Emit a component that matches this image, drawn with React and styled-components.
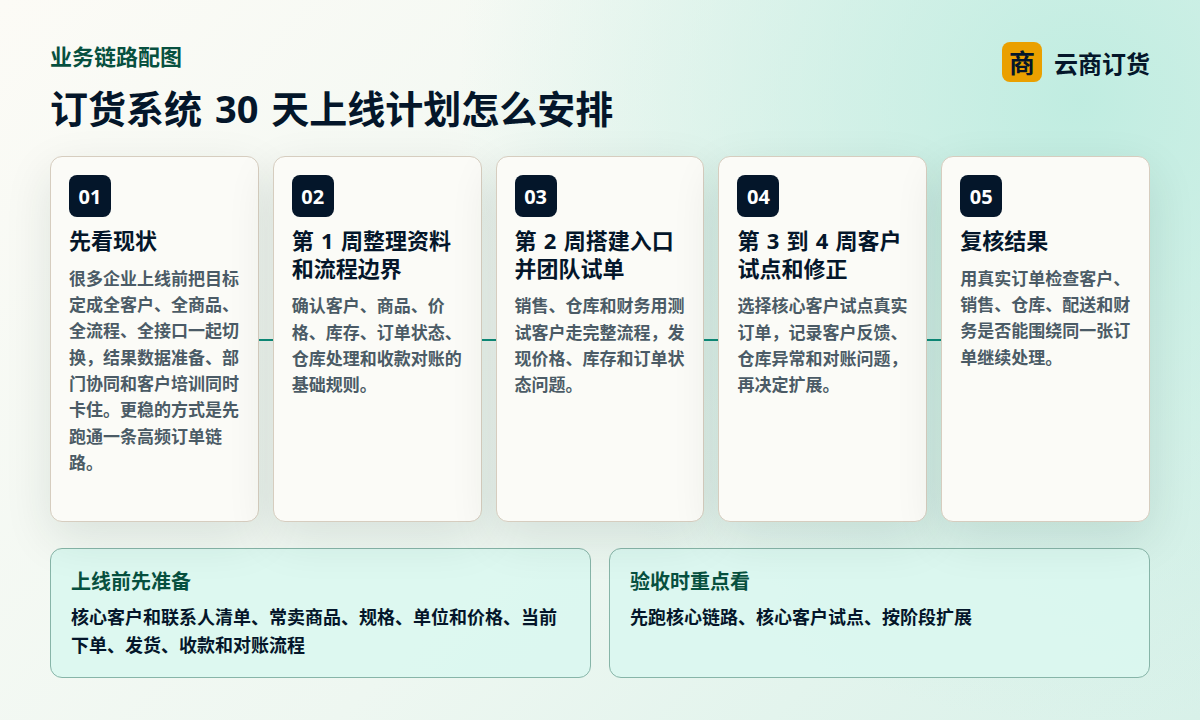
import React from 'react'
import styled, { createGlobalStyle } from 'styled-components'

const GlobalStyle = createGlobalStyle`
  html, body {
    margin: 0;
    padding: 0;
  }
  body {
    font-family: "Noto Sans", "Noto Sans CJK SC", sans-serif;
  }
`

const steps = [
  {
    no: '01',
    title: '先看现状',
    text: '很多企业上线前把目标定成全客户、全商品、全流程、全接口一起切换，结果数据准备、部门协同和客户培训同时卡住。更稳的方式是先跑通一条高频订单链路。',
  },
  {
    no: '02',
    title: '第 1 周整理资料和流程边界',
    text: '确认客户、商品、价格、库存、订单状态、仓库处理和收款对账的基础规则。',
  },
  {
    no: '03',
    title: '第 2 周搭建入口并团队试单',
    text: '销售、仓库和财务用测试客户走完整流程，发现价格、库存和订单状态问题。',
  },
  {
    no: '04',
    title: '第 3 到 4 周客户试点和修正',
    text: '选择核心客户试点真实订单，记录客户反馈、仓库异常和对账问题，再决定扩展。',
  },
  {
    no: '05',
    title: '复核结果',
    text: '用真实订单检查客户、销售、仓库、配送和财务是否能围绕同一张订单继续处理。',
  },
]

export default function App() {
  return (
    <Page>
      <GlobalStyle />
      <Header>
        <div>
          <Eyebrow>业务链路配图</Eyebrow>
          <Title>订货系统 30 天上线计划怎么安排</Title>
        </div>
        <Brand>
          <BrandMark>商</BrandMark>
          <BrandName>云商订货</BrandName>
        </Brand>
      </Header>

      <Steps>
        {steps.map((step, index) => (
          <StepCard key={step.no} $connected={index < steps.length - 1}>
            <StepNumber>{step.no}</StepNumber>
            <StepTitle>{step.title}</StepTitle>
            <StepText>{step.text}</StepText>
          </StepCard>
        ))}
      </Steps>

      <Notes>
        <Note>
          <NoteTitle>上线前先准备</NoteTitle>
          <NoteText>核心客户和联系人清单、常卖商品、规格、单位和价格、当前下单、发货、收款和对账流程</NoteText>
        </Note>
        <Note>
          <NoteTitle>验收时重点看</NoteTitle>
          <NoteText>先跑核心链路、核心客户试点、按阶段扩展</NoteText>
        </Note>
      </Notes>
    </Page>
  )
}

const Page = styled.div`
  box-sizing: border-box;
  width: 1200px;
  height: 720px;
  padding: 40px 50px 42px;
  overflow: hidden;
  display: flex;
  flex-direction: column;
  background:
    radial-gradient(circle at 90% 14%, rgba(190, 236, 224, 0.95) 0%, rgba(190, 236, 224, 0) 50%),
    linear-gradient(135deg, #fcfbf6 0%, #eef7f1 55%, #d8f1e9 100%);
`

const Header = styled.header`
  display: flex;
  justify-content: space-between;
  align-items: flex-start;
  height: 116px;
`

const Eyebrow = styled.div`
  font-size: 22px;
  line-height: 32px;
  font-weight: 700;
  color: #07503f;
`

const Title = styled.h1`
  margin: 10px 0 0;
  font-size: 38px;
  line-height: 52px;
  font-weight: 700;
  color: #04162a;
  word-spacing: 0.08em;
`

const Brand = styled.div`
  display: flex;
  align-items: center;
  gap: 12px;
  margin-top: 2px;
`

const BrandMark = styled.div`
  width: 40px;
  height: 40px;
  border-radius: 8px;
  background: #eaa000;
  color: #04162a;
  font-size: 26px;
  font-weight: 700;
  display: flex;
  align-items: center;
  justify-content: center;
`

const BrandName = styled.div`
  font-size: 24px;
  font-weight: 700;
  color: #04162a;
`

const Steps = styled.section`
  display: grid;
  grid-template-columns: repeat(5, 1fr);
  gap: 14px;
  height: 366px;
`

const StepCard = styled.article`
  position: relative;
  box-sizing: border-box;
  padding: 18px;
  border: 1px solid #d6cdbf;
  border-radius: 12px;
  background: #fbfbf7;
  box-shadow: 0 16px 48px rgba(4, 50, 40, 0.11);

  &::after {
    content: '';
    display: ${props => (props.$connected ? 'block' : 'none')};
    position: absolute;
    top: 182px;
    right: -15px;
    width: 14px;
    height: 2px;
    background: #0d8a78;
  }
`

const StepNumber = styled.div`
  width: 42px;
  height: 42px;
  border-radius: 8px;
  background: #04162a;
  color: #ffffff;
  font-size: 20px;
  font-weight: 700;
  display: flex;
  align-items: center;
  justify-content: center;
`

const StepTitle = styled.h2`
  margin: 10px 0 0;
  font-size: 22px;
  line-height: 27.5px;
  font-weight: 700;
  color: #04162a;
  word-spacing: 0.07em;
`

const StepText = styled.p`
  margin: 11.2px 0 0;
  font-size: 17px;
  line-height: 26.35px;
  font-weight: 700;
  color: #4b5b66;
`

const Notes = styled.section`
  display: grid;
  grid-template-columns: 1fr 1fr;
  gap: 18px;
  margin-top: 26px;
  height: 130px;
`

const Note = styled.div`
  box-sizing: border-box;
  padding: 19px 20px 18px;
  border: 1px solid #87b5a8;
  border-radius: 12px;
  background: rgba(218, 247, 239, 0.9);
`

const NoteTitle = styled.h3`
  margin: 0;
  font-size: 20px;
  line-height: 28px;
  font-weight: 700;
  color: #07503f;
`

const NoteText = styled.p`
  margin: 7px 0 0;
  font-size: 18px;
  line-height: 28px;
  font-weight: 700;
  color: #04162a;
`
